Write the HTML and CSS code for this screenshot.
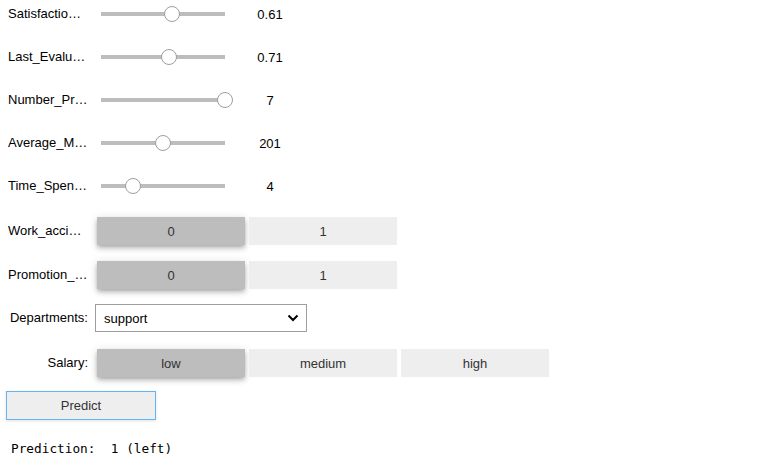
FILE: index.html
```html
<!DOCTYPE html>
<html>
<head>
<meta charset="utf-8">
<link rel="stylesheet" href="styles.css">
</head>
<body>
<div class="app">
  <div class="row slider-row">
    <div class="label">Satisfaction_Level:</div>
    <div class="slider"><div class="track"></div><div class="thumb" style="left: 57%"></div></div>
    <div class="readout">0.61</div>
  </div>
  <div class="row slider-row">
    <div class="label">Last_Evaluation:</div>
    <div class="slider"><div class="track"></div><div class="thumb" style="left: 55%"></div></div>
    <div class="readout">0.71</div>
  </div>
  <div class="row slider-row">
    <div class="label">Number_Projects:</div>
    <div class="slider"><div class="track"></div><div class="thumb" style="left: 100%"></div></div>
    <div class="readout">7</div>
  </div>
  <div class="row slider-row">
    <div class="label">Average_Monthly_Hours:</div>
    <div class="slider"><div class="track"></div><div class="thumb" style="left: 50%"></div></div>
    <div class="readout">201</div>
  </div>
  <div class="row slider-row">
    <div class="label">Time_Spent_Company:</div>
    <div class="slider"><div class="track"></div><div class="thumb" style="left: 26%"></div></div>
    <div class="readout">4</div>
  </div>
  <div class="row toggle-row first-toggle">
    <div class="label">Work_accident:</div>
    <div class="toggles">
      <button class="tbtn active">0</button>
      <button class="tbtn">1</button>
    </div>
  </div>
  <div class="row toggle-row second-toggle">
    <div class="label">Promotion_Last_5Years:</div>
    <div class="toggles">
      <button class="tbtn active">0</button>
      <button class="tbtn">1</button>
    </div>
  </div>
  <div class="row dropdown-row">
    <div class="label">Departments:</div>
    <div class="dropdown">
      <span>support</span>
      <svg class="chev" width="12" height="8" viewBox="0 0 12 8"><path d="M1.5 1.5 L6 6 L10.5 1.5" fill="none" stroke="#000" stroke-width="2"/></svg>
    </div>
  </div>
  <div class="row toggle-row salary">
    <div class="label">Salary:</div>
    <div class="toggles">
      <button class="tbtn active">low</button>
      <button class="tbtn">medium</button>
      <button class="tbtn">high</button>
    </div>
  </div>
  <div class="predict-row">
    <button class="predict">Predict</button>
  </div>
  <pre class="output">Prediction:  1 (left)</pre>
</div>
</body>
</html>
```

FILE: styles.css
```css
html, body {
  margin: 0;
  padding: 0;
  background: #fff;
}
body {
  font-family: "Liberation Sans", Arial, sans-serif;
  font-size: 13px;
  color: #000;
}
.app {
  display: flex;
  flex-direction: column;
  padding-left: 6px;
}
.row {
  display: flex;
  align-items: center;
  height: 28px;
  margin-bottom: 15px;
}
.label {
  width: 80px;
  padding-left: 2px;
  margin-right: 7px;
  white-space: nowrap;
  overflow: hidden;
  text-overflow: ellipsis;
  text-align: right;
  line-height: 28px;
  flex-shrink: 0;
}
.slider {
  position: relative;
  width: 124px;
  height: 28px;
  margin-left: 6px;
}
.track {
  position: absolute;
  left: 0;
  right: 0;
  top: 12px;
  height: 4px;
  background: #bdbdbd;
}
.thumb {
  position: absolute;
  top: 6px;
  width: 14px;
  height: 14px;
  margin-left: -8px;
  border: 1px solid #9e9e9e;
  border-radius: 50%;
  background: #fff;
}
.readout {
  width: 64px;
  margin-left: 13px;
  text-align: center;
}
.first-toggle {
  margin-top: 2px;
}
.second-toggle {
  margin-top: 1px;
}
.toggles {
  display: flex;
  gap: 4px;
  margin-left: 2px;
}
.tbtn {
  width: 148px;
  height: 28px;
  border: none;
  margin: 0;
  padding: 0;
  background: #eeeeee;
  color: #333;
  font-family: "Liberation Sans", Arial, sans-serif;
  font-size: 13px;
}
.tbtn.active {
  background: #bdbdbd;
  box-shadow: 0 4px 5px 0 rgba(0,0,0,0.14), 0 1px 10px 0 rgba(0,0,0,0.12), 0 2px 4px -1px rgba(0,0,0,0.2);
}
.dropdown {
  box-sizing: border-box;
  width: 212px;
  height: 28px;
  border: 1px solid #9e9e9e;
  display: flex;
  align-items: center;
  justify-content: space-between;
  padding: 0 7px 0 8px;
  color: #000;
}
.chev {
  display: block;
}
.salary {
  margin-top: 2px;
  margin-bottom: 14px;
}
.predict-row {
  display: flex;
}
.predict {
  box-sizing: border-box;
  width: 150px;
  height: 29px;
  margin: 0;
  background: #eeeeee;
  border: 1px solid #64b5f6;
  color: #333;
  font-family: "Liberation Sans", Arial, sans-serif;
  font-size: 13px;
  box-shadow: 0 1px 3px rgba(0,0,0,0.12);
}
.output {
  margin: 19px 0 0 5px;
  font-family: "DejaVu Sans Mono", monospace;
  font-size: 12.75px;
  line-height: 20px;
  color: #000;
}
```
